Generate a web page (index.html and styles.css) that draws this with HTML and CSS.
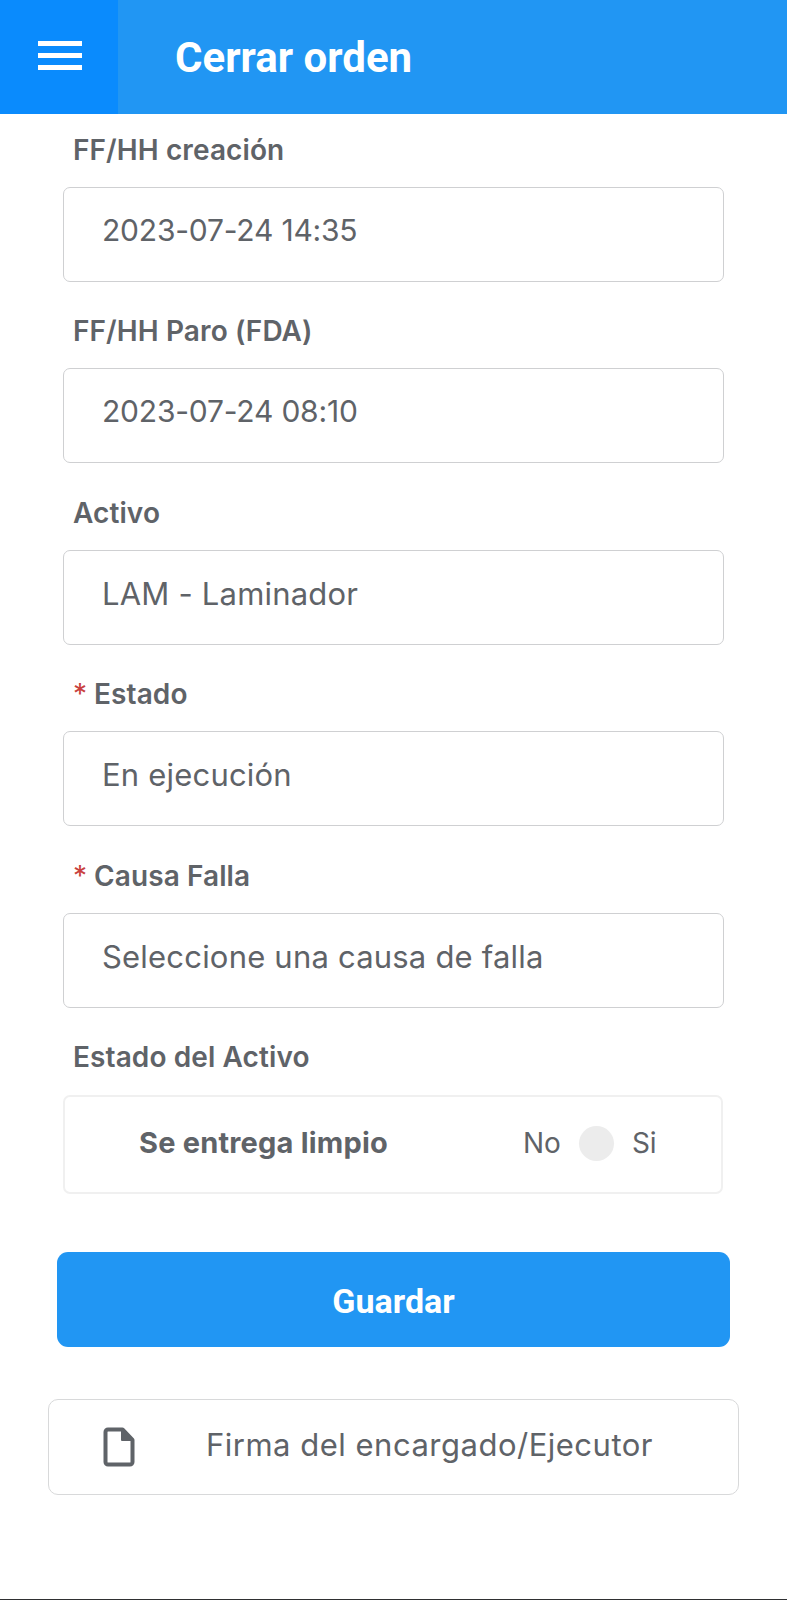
FILE: index.html
```html
<!DOCTYPE html>
<html lang="es">
<head>
  <meta charset="UTF-8" />
  <meta name="viewport" content="width=device-width, initial-scale=1.0"/>
  <title>Cerrar orden</title>
  <link rel="stylesheet" href="styles.css">
</head>
<body>

<header class="topbar">
  <div class="menu-btn">
    <span class="menu-line"></span>
    <span class="menu-line"></span>
    <span class="menu-line"></span>
  </div>
  <h1 class="topbar-title">Cerrar orden</h1>
</header>

<main class="order-form">
  <div class="field">
    <label class="field-label">FF/HH creación</label>
    <div class="field-box date-value">2023-07-24 14:35</div>
  </div>
  <div class="field">
    <label class="field-label">FF/HH Paro (FDA)</label>
    <div class="field-box date-value">2023-07-24 08:10</div>
  </div>
  <div class="field">
    <label class="field-label">Activo</label>
    <div class="field-box">LAM - Laminador</div>
  </div>
  <div class="field">
    <label class="field-label"><span class="required">*</span>Estado</label>
    <div class="field-box">En ejecución</div>
  </div>
  <div class="field">
    <label class="field-label"><span class="required">*</span>Causa Falla</label>
    <div class="field-box">Seleccione una causa de falla</div>
  </div>
  <div class="field">
    <label class="field-label">Estado del Activo</label>
    <div class="check-card">
      <span class="check-name">Se entrega limpio</span>
      <span class="check-no">No</span>
      <span class="check-dot"></span>
      <span class="check-si">Si</span>
    </div>
  </div>
</main>

<button class="save-btn">Guardar</button>

<div class="sign-row">
  <svg class="sign-icon" viewBox="0 0 32 40" width="32" height="40">
    <path d="M5 2.5h14.5L29.5 13v22a2.5 2.5 0 0 1-2.5 2.5H5A2.5 2.5 0 0 1 2.5 35V5A2.5 2.5 0 0 1 5 2.5z" fill="#fff" stroke="#5f6368" stroke-width="4" stroke-linejoin="round"/>
    <path d="M19 2.5L29.5 13H19z" fill="#5f6368" stroke="#5f6368" stroke-width="2" stroke-linejoin="round"/>
  </svg>
  <span class="sign-text">Firma del encargado/Ejecutor</span>
</div>

<div class="bottom-line"></div>

</body>
</html>
```

FILE: styles.css
```css
* { box-sizing: border-box; }

html, body {
  height: 1600px;
}

body {
  margin: 0;
  background: #fff;
  color: #5f6368;
  font-family: Inter, Arial, sans-serif;
  display: flex;
  flex-direction: column;
  overflow: hidden;
}

.topbar {
  height: 114px;
  flex: none;
  display: flex;
  align-items: center;
  background: #2196f3;
}

.menu-btn {
  width: 118px;
  height: 100%;
  background: #0a8bfd;
  display: flex;
  flex-direction: column;
  gap: 7px;
  padding: 41px 0 0 38px;
}

.menu-line {
  width: 44px;
  height: 5px;
  background: #fff;
}

.topbar-title {
  margin: 0 0 0 57px;
  color: #fff;
  font-family: Roboto, Arial, sans-serif;
  font-size: 42px;
  font-weight: 700;
}

.order-form {
  display: flex;
  flex-direction: column;
  gap: 13.4px;
  padding: 0 63px;
}

.field-label {
  display: flex;
  align-items: center;
  height: 73px;
  padding: 0 0 1px 10px;
  font-size: 28px;
  font-weight: 600;
  letter-spacing: 0.1px;
}

.required {
  color: #c9413f;
  font-weight: 400;
  width: 21px;
}

.field-box {
  height: 95px;
  border: 1px solid #cfd0d2;
  border-radius: 7px;
  padding: 21px 0 0 38px;
  font-size: 31px;
  line-height: 44px;
  letter-spacing: 0.2px;
}

.date-value {
  padding-top: 20px;
  font-size: 30px;
  letter-spacing: -0.2px;
}

.check-card {
  height: 99px;
  width: 660px;
  margin-top: 1px;
  display: flex;
  align-items: flex-start;
  padding: 24px 0 0 74px;
  border: 2px solid #f0f0f0;
  border-radius: 7px;
  font-size: 28px;
  line-height: 44px;
}

.check-name {
  width: 384px;
  font-size: 29px;
  font-weight: 700;
  letter-spacing: 0.2px;
  white-space: nowrap;
}

.check-dot {
  width: 35px;
  height: 35px;
  margin: 5px 18px 0 18px;
  border-radius: 50%;
  background: #ececec;
}

.save-btn {
  display: block;
  flex: none;
  width: 673px;
  height: 95px;
  margin: 58px 0 0 57px;
  padding-top: 4px;
  border: none;
  border-radius: 11px;
  background: #2196f3;
  color: #fff;
  font-family: Roboto, Arial, sans-serif;
  font-size: 34px;
  font-weight: 700;
}

.sign-row {
  flex: none;
  width: 691px;
  height: 96px;
  margin: 52px 0 0 48px;
  display: flex;
  align-items: center;
  padding-left: 54px;
  border: 1px solid #d8d9da;
  border-radius: 10px;
}

.sign-text {
  margin: 0 0 5px 71px;
  font-size: 31px;
  letter-spacing: 0.5px;
  white-space: nowrap;
}

.bottom-line {
  flex: none;
  height: 1px;
  margin-top: auto;
  background: #2f3032;
}
```
